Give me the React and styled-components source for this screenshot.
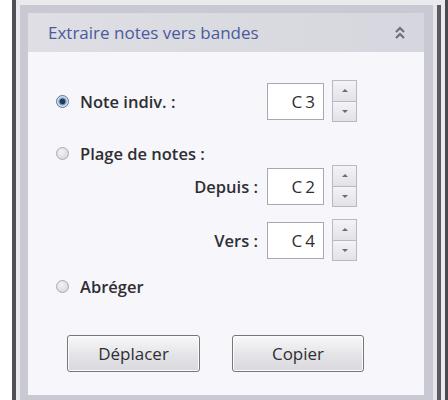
import React from "react";
import styled, { createGlobalStyle } from "styled-components";

const Global = createGlobalStyle`
  html, body {
    margin: 0;
    padding: 0;
    background: #ffffff;
    font-family: "Open Sans", "Liberation Sans", sans-serif;
  }
`;

const Page = styled.div`
  display: flex;
  width: 448px;
  height: 400px;
  padding-left: 12px;
  box-sizing: border-box;
  overflow: hidden;
`;

const Window = styled.div`
  flex: 1;
  min-width: 0;
  display: flex;
  background: #e9e9ee;
  border-left: 4px solid #4f4f55;
  border-right: 3px solid #4a4a50;
  padding: 5px 4px 0 4px;
`;

const Frame = styled.div`
  flex: 1;
  min-width: 0;
  display: flex;
  flex-direction: column;
  background: #c9c9d3;
  border-right: 4px solid #5a5a62;
  box-shadow: inset -4px 0 0 #e6e6ec;
  padding: 8px 13px 5px 8px;
`;

const Header = styled.div`
  height: 39px;
  display: flex;
  align-items: center;
  justify-content: space-between;
  padding: 0 18px 0 20px;
  background: linear-gradient(90deg, #dedee4, #d6d6de);
`;

const Title = styled.span`
  font-size: 17px;
  color: #4a5a9e;
`;

const Body = styled.div`
  flex: 1;
  background: #f7f6fa;
  padding: 28px 0 0 28px;
  display: flex;
  flex-direction: column;
`;

const Row = styled.div`
  display: flex;
  align-items: center;
  width: 301px;
  height: ${p => p.$h || 42}px;
  margin-top: ${p => p.$mt || 0}px;
  justify-content: ${p => (p.$end ? "flex-end" : "space-between")};
`;

const Choice = styled.label`
  display: flex;
  align-items: center;
  gap: 11px;
`;

const Radio = styled.span`
  width: 13px;
  height: 13px;
  border-radius: 50%;
  box-sizing: border-box;
  border: 1px solid ${p => (p.$on ? "#5f7593" : "#a9a9b2")};
  background: ${p =>
    p.$on
      ? "radial-gradient(circle, #1f3a5c 0 2.5px, #5d86b4 3px, #c8d6e6 4.5px, #eef2f7 6px)"
      : "radial-gradient(circle at 40% 35%, #f4f4f6, #cfcfd6)"};
`;

const Label = styled.span`
  font-size: 16.5px;
  font-weight: 600;
  color: #2e2e33;
  margin-right: ${p => p.$mr || 0}px;
`;

const Spin = styled.div`
  display: flex;
  align-items: center;
  gap: 8px;
`;

const Value = styled.div`
  width: 57px;
  height: 37px;
  box-sizing: border-box;
  border: 1px solid #a8a8b0;
  background: #ffffff;
  display: flex;
  align-items: center;
  justify-content: flex-end;
  padding-right: 5px;
  font-size: 17px;
  color: #2e2e33;
  letter-spacing: 3px;
`;

const Arrows = styled.div`
  display: flex;
  flex-direction: column;
  width: 25px;
  height: 42px;
`;

const Arrow = styled.div`
  flex: 1;
  box-sizing: border-box;
  border: 1px solid #b9b9c2;
  margin-top: ${p => (p.$down ? "-1px" : 0)};
  background: linear-gradient(#f4f4f7, #e1e1e7);
  display: flex;
  align-items: center;
  justify-content: center;
  &::after {
    content: "";
    border-left: 3px solid transparent;
    border-right: 3px solid transparent;
    ${p => (p.$down ? "border-top: 3px solid #6b6b74;" : "border-bottom: 3px solid #6b6b74;")}
  }
`;

const Buttons = styled.div`
  display: flex;
  gap: 32px;
  margin-top: 37px;
  padding-left: 11px;
`;

const Button = styled.button`
  width: ${p => p.$w}px;
  height: 37px;
  border: 1px solid #76767c;
  border-radius: 3px;
  background: linear-gradient(#f8f8fa, #e4e4e8 55%, #dadade);
  font-family: "Open Sans", "Liberation Sans", sans-serif;
  font-size: 17px;
  color: #2e2e33;
  box-shadow: inset 0 0 0 1px #fbfbfc;
`;

const Chevrons = () => (
  <svg width="12" height="14" viewBox="0 0 12 14" fill="none" stroke="#6c6c72" strokeWidth="2">
    <path d="M2 6 L6 2 L10 6" />
    <path d="M2 12 L6 8 L10 12" />
  </svg>
);

const Spinner = ({ value }) => (
  <Spin>
    <Value>{value}</Value>
    <Arrows>
      <Arrow />
      <Arrow $down />
    </Arrows>
  </Spin>
);

export default function App() {
  return (
    <Page>
      <Global />
      <Window>
        <Frame>
          <Header>
            <Title>Extraire notes vers bandes</Title>
            <Chevrons />
          </Header>
          <Body>
            <Row>
              <Choice>
                <Radio $on />
                <Label>Note indiv. :</Label>
              </Choice>
              <Spinner value="C3" />
            </Row>
            <Row $h={24} $mt={19}>
              <Choice>
                <Radio />
                <Label>Plage de notes :</Label>
              </Choice>
            </Row>
            <Row $end>
              <Label $mr={9}>Depuis :</Label>
              <Spinner value="C2" />
            </Row>
            <Row $end $mt={12}>
              <Label $mr={9}>Vers :</Label>
              <Spinner value="C4" />
            </Row>
            <Row $h={24} $mt={13}>
              <Choice>
                <Radio />
                <Label>Abréger</Label>
              </Choice>
            </Row>
            <Buttons>
              <Button $w={133}>Déplacer</Button>
              <Button $w={132}>Copier</Button>
            </Buttons>
          </Body>
        </Frame>
      </Window>
    </Page>
  );
}
